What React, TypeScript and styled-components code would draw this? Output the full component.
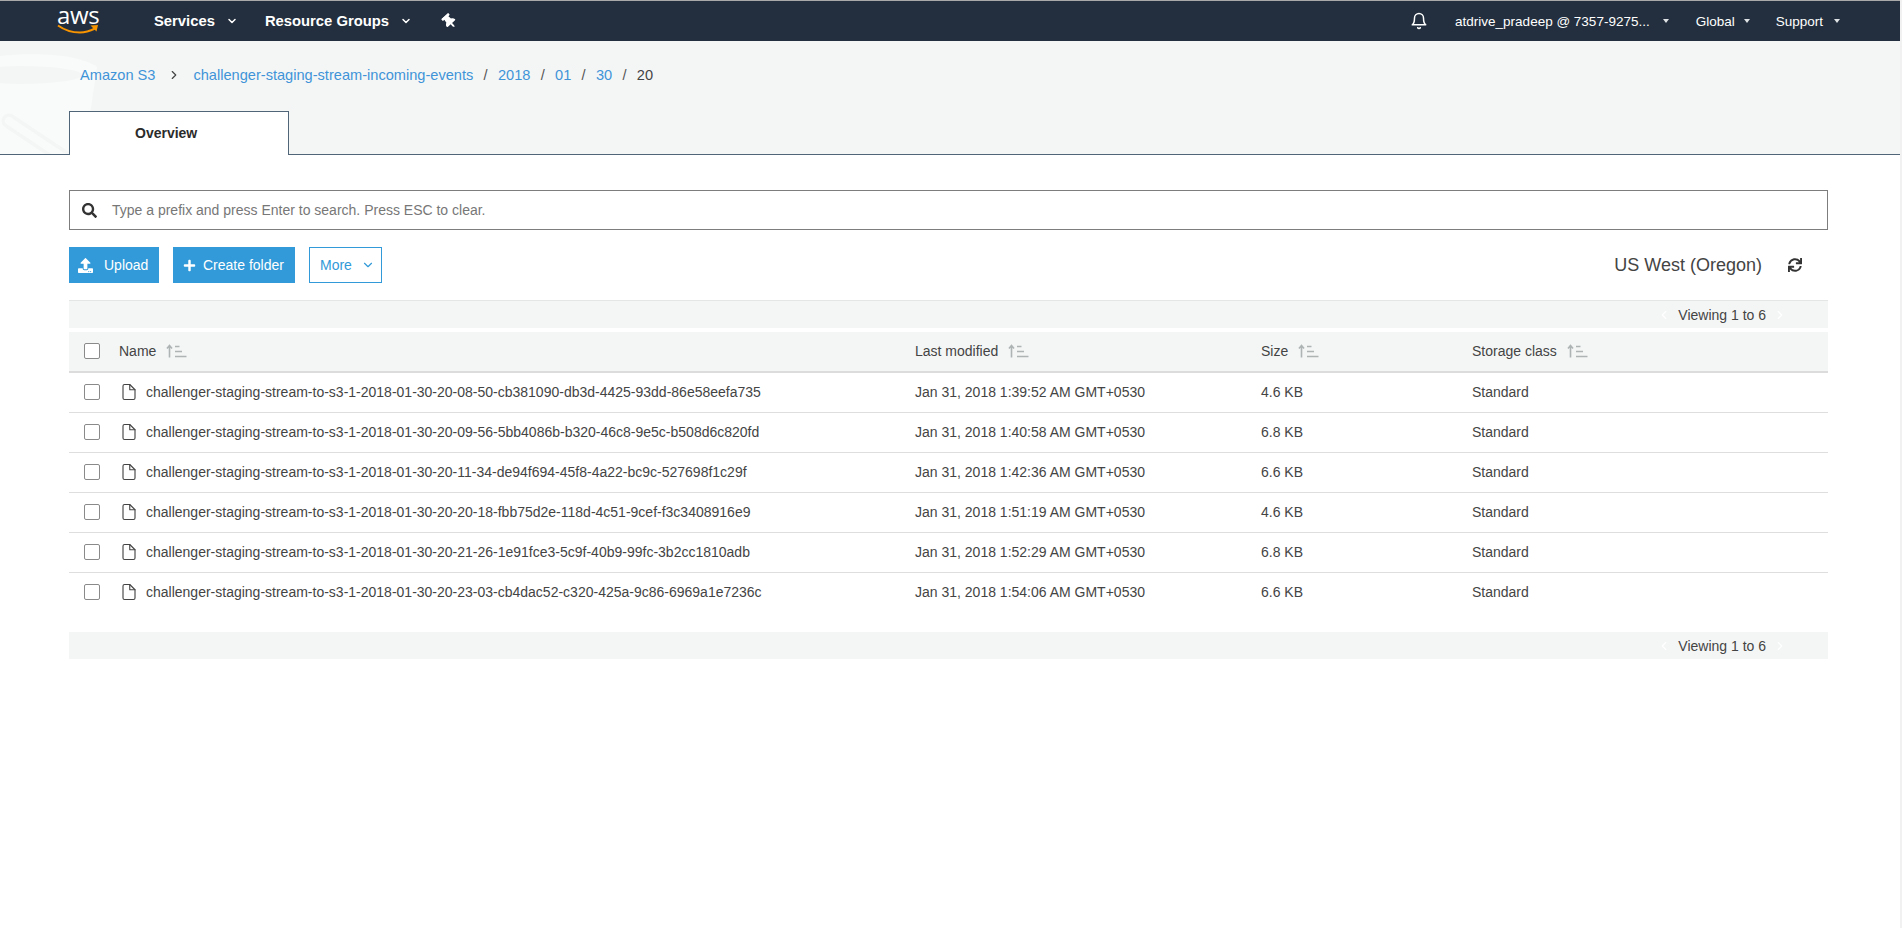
import styled, { createGlobalStyle } from "styled-components";
import { FaPlus, FaSearch, FaSync, FaThumbtack, FaUpload } from "react-icons/fa";
import { FiBell, FiChevronDown, FiChevronLeft, FiChevronRight, FiFile } from "react-icons/fi";

const GlobalStyle = createGlobalStyle`
  * {
    box-sizing: border-box;
  }

  html,
  body {
    margin: 0;
    height: 100%;
    background: #fff;
    overflow: hidden;
  }

  body {
    font-family: "Liberation Sans", Arial, sans-serif;
    font-size: 14px;
    color: #444;
  }
`;

const Shell = styled.div`
  display: flex;
  height: 928px;
`;

const Page = styled.div`
  width: 1900px;
  display: flex;
  flex-direction: column;
`;

const ScrollTrack = styled.div`
  width: 2px;
  background: #f1f1f1;
`;

const TopBar = styled.header`
  height: 41px;
  flex: none;
  background: #232f3e;
  border-top: 1px solid #a9a9a9;
  display: flex;
  align-items: center;
  color: #fff;
`;

const Logo = styled.div`
  position: relative;
  width: 42px;
  height: 32px;
  margin: -3px 0 0 57px;
`;

const LogoText = styled.span`
  display: block;
  font-family: "Open Sans", sans-serif;
  font-size: 24px;
  line-height: 22px;
  text-align: center;
  letter-spacing: -0.3px;
`;

const LogoSmile = styled.svg`
  position: absolute;
  left: 0;
  top: 19px;
`;

const NavLeft = styled.nav`
  display: flex;
  align-items: center;
  margin-left: 55px;
`;

const NavMenu = styled.div<{ $after: number }>`
  display: flex;
  align-items: center;
  gap: 11px;
  font-weight: 700;
  font-size: 14.8px;
  margin-right: ${(p) => p.$after}px;
`;

const PinIcon = styled(FaThumbtack)`
  width: 15px;
  height: 15px;
  transform: rotate(-42deg);
  margin-left: 2px;
`;

const NavRight = styled.div`
  margin-left: auto;
  display: flex;
  align-items: center;
  font-size: 13.5px;
  padding-right: 60px;
`;

const BellIcon = styled(FiBell)`
  width: 18px;
  height: 18px;
  margin-right: 27px;
`;

const AccountMenu = styled.div<{ $gap: number; $after: number }>`
  display: flex;
  align-items: center;
  gap: ${(p) => p.$gap}px;
  margin-right: ${(p) => p.$after}px;
`;

const Caret = styled.span`
  width: 0;
  height: 0;
  border-left: 3.5px solid transparent;
  border-right: 3.5px solid transparent;
  border-top: 4px solid #dfe3e6;
`;

const NavChevron = styled(FiChevronDown)`
  width: 12px;
  height: 12px;
  stroke-width: 3;
`;

const SubHeader = styled.section`
  position: relative;
  flex: none;
  height: 114px;
  background: #f4f6f6;
  border-bottom: 1px solid #516578;
`;

const Watermark = styled.svg`
  position: absolute;
  left: 0;
  top: 0;
`;

const Breadcrumb = styled.div`
  position: relative;
  display: flex;
  align-items: center;
  height: 66px;
  padding: 1px 0 0 80px;
  font-size: 14.6px;
`;

const Crumb = styled.span`
  color: #3f94d8;
`;

const CrumbCurrent = styled.span`
  color: #444;
`;

const CrumbSlash = styled.span`
  color: #555;
  margin: 0 10.3px;
`;

const CrumbArrow = styled(FiChevronRight)`
  width: 14px;
  height: 14px;
  color: #444;
  margin: 0 12px;
`;

const Tab = styled.div`
  position: relative;
  margin: 4px 0 0 69px;
  width: 220px;
  height: 44px;
  background: #fff;
  border: 1px solid #516578;
  border-bottom: 0;
  padding: 0 0 1px 65px;
  display: flex;
  align-items: center;
  font-size: 14px;
  font-weight: 700;
  color: #2b2b2b;
`;

const Content = styled.main`
  padding: 35px 72px 0 69px;
`;

const SearchRow = styled.div`
  height: 40px;
  border: 1px solid #7d7d7d;
  background: #fff;
  display: flex;
  align-items: center;
  padding-left: 12px;
  color: #777;
  font-size: 14px;
`;

const SearchIcon = styled(FaSearch)`
  width: 15px;
  height: 15px;
  color: #333;
  margin-right: 15px;
`;

const Toolbar = styled.div`
  margin-top: 17px;
  height: 36px;
  display: flex;
  align-items: center;
  gap: 14px;
`;

const PrimaryButton = styled.button<{ $width: number; $inset: number; $gap: number }>`
  width: ${(p) => p.$width}px;
  height: 36px;
  border: 0;
  padding: 0 0 0 ${(p) => p.$inset}px;
  background: #329ad8;
  color: #fff;
  font-family: inherit;
  font-size: 14px;
  display: flex;
  align-items: center;
  gap: ${(p) => p.$gap}px;
`;

const OutlineButton = styled.button`
  width: 73px;
  height: 36px;
  border: 1px solid #329ad8;
  background: #fff;
  color: #329ad8;
  font-family: inherit;
  font-size: 14px;
  padding: 0 0 0 10px;
  display: flex;
  align-items: center;
  gap: 9px;
`;

const Region = styled.div`
  margin-left: auto;
  display: flex;
  align-items: center;
  font-size: 18px;
  color: #444;
  padding-right: 26px;
  gap: 26px;
`;

const RefreshIcon = styled(FaSync)`
  width: 14px;
  height: 14px;
  color: #333;
`;

const PagerStrip = styled.div<{ $top: number; $line: boolean }>`
  margin-top: ${(p) => p.$top}px;
  height: ${(p) => (p.$line ? 28 : 27)}px;
  background: #f4f6f6;
  border-top: ${(p) => (p.$line ? "1px solid #e4e6e6" : "0")};
  display: flex;
  align-items: center;
  justify-content: flex-end;
  padding-right: 41px;
  font-size: 14px;
  gap: 7px;
  color: #444;
`;

const PagerArrow = styled.span`
  display: flex;
  color: #fff;
  font-size: 14px;
`;

const Row = styled.div`
  display: grid;
  grid-template-columns: 50px 796px 346px 211px 1fr;
  align-items: center;
  height: 40px;
  padding-bottom: 2px;
  border-bottom: 1px solid #dedede;
  font-size: 14px;
  color: #444;
`;

const HeaderRow = styled(Row)`
  margin-top: 4px;
  height: 41px;
  background: #f4f6f6;
  border-bottom: 2px solid #dcdcdc;
`;

const Rows = styled.div`
  & > :last-child {
    border-bottom: 0;
  }
`;

const CheckCell = styled.div`
  padding-left: 15px;
  display: flex;
`;

const Check = styled.span`
  width: 16px;
  height: 16px;
  background: #fff;
  border: 1px solid #8a8a8a;
  border-radius: 2px;
`;

const HeadCell = styled.div`
  display: flex;
  align-items: center;
  gap: 10px;
`;

const NameCell = styled.div`
  display: flex;
  align-items: center;
  gap: 8px;
  padding-left: 1px;
`;

const FileIcon = styled(FiFile)`
  width: 18px;
  height: 18px;
  color: #444;
  stroke-width: 1.5;
`;

const SortIcon = styled.svg`
  flex: none;
`;

const Sort = () => (
  <SortIcon width="21" height="14" viewBox="0 0 21 14">
    <path d="M3.5 13.5V1.5M1 4.5 3.5 1.5 6 4.5" fill="none" stroke="#aeb3b3" strokeWidth="1.6" />
    <path d="M9 2.5h4.5M9 7.5h7M9 12.5h11.5" fill="none" stroke="#aeb3b3" strokeWidth="1.7" />
  </SortIcon>
);

const FILES = [
  ["challenger-staging-stream-to-s3-1-2018-01-30-20-08-50-cb381090-db3d-4425-93dd-86e58eefa735", "Jan 31, 2018 1:39:52 AM GMT+0530", "4.6 KB"],
  ["challenger-staging-stream-to-s3-1-2018-01-30-20-09-56-5bb4086b-b320-46c8-9e5c-b508d6c820fd", "Jan 31, 2018 1:40:58 AM GMT+0530", "6.8 KB"],
  ["challenger-staging-stream-to-s3-1-2018-01-30-20-11-34-de94f694-45f8-4a22-bc9c-527698f1c29f", "Jan 31, 2018 1:42:36 AM GMT+0530", "6.6 KB"],
  ["challenger-staging-stream-to-s3-1-2018-01-30-20-20-18-fbb75d2e-118d-4c51-9cef-f3c3408916e9", "Jan 31, 2018 1:51:19 AM GMT+0530", "4.6 KB"],
  ["challenger-staging-stream-to-s3-1-2018-01-30-20-21-26-1e91fce3-5c9f-40b9-99fc-3b2cc1810adb", "Jan 31, 2018 1:52:29 AM GMT+0530", "6.8 KB"],
  ["challenger-staging-stream-to-s3-1-2018-01-30-20-23-03-cb4dac52-c320-425a-9c86-6969a1e7236c", "Jan 31, 2018 1:54:06 AM GMT+0530", "6.6 KB"],
];

const Pager = ({ top, line }: { top: number; line: boolean }) => (
  <PagerStrip $top={top} $line={line}>
    <PagerArrow>
      <FiChevronLeft />
    </PagerArrow>
    Viewing 1 to 6
    <PagerArrow>
      <FiChevronRight />
    </PagerArrow>
  </PagerStrip>
);

export default function App() {
  return (
    <Shell>
      <GlobalStyle />
      <Page>
        <TopBar>
          <Logo>
            <LogoText>aws</LogoText>
            <LogoSmile width="42" height="12" viewBox="0 0 42 12">
              <path d="M1 2.5C8 7.5 16 9.5 23 9.5c5 0 10-1.5 15-4" fill="none" stroke="#f79400" strokeWidth="2" />
              <path d="M33.5 2.5 41 2l-1.5 6.5z" fill="#f79400" />
            </LogoSmile>
          </Logo>
          <NavLeft>
            <NavMenu $after={27}>
              Services
              <NavChevron />
            </NavMenu>
            <NavMenu $after={28}>
              Resource Groups
              <NavChevron />
            </NavMenu>
            <PinIcon />
          </NavLeft>
          <NavRight>
            <BellIcon />
            <AccountMenu $gap={13} $after={27}>
              atdrive_pradeep @ 7357-9275...
              <Caret />
            </AccountMenu>
            <AccountMenu $gap={9} $after={26}>
              Global
              <Caret />
            </AccountMenu>
            <AccountMenu $gap={11} $after={0}>
              Support
              <Caret />
            </AccountMenu>
          </NavRight>
        </TopBar>

        <SubHeader>
          <Watermark width="110" height="113" viewBox="0 0 110 113">
            <path d="M0 15C40 11 80 14 97 26L84 113H0z" fill="#f9fbfb" />
            <ellipse cx="22" cy="34" rx="60" ry="9" fill="#f4f6f6" />
            <path d="M9 80 66 118" fill="none" stroke="#f4f6f6" strokeWidth="15" strokeLinecap="round" />
            <path d="M9 80 66 118" fill="none" stroke="#f9fbfb" strokeWidth="8" strokeLinecap="round" />
          </Watermark>
          <Breadcrumb>
            <Crumb>Amazon S3</Crumb>
            <CrumbArrow />
            <Crumb>challenger-staging-stream-incoming-events</Crumb>
            <CrumbSlash>/</CrumbSlash>
            <Crumb>2018</Crumb>
            <CrumbSlash>/</CrumbSlash>
            <Crumb>01</Crumb>
            <CrumbSlash>/</CrumbSlash>
            <Crumb>30</Crumb>
            <CrumbSlash>/</CrumbSlash>
            <CrumbCurrent>20</CrumbCurrent>
          </Breadcrumb>
          <Tab>Overview</Tab>
        </SubHeader>

        <Content>
          <SearchRow>
            <SearchIcon />
            Type a prefix and press Enter to search. Press ESC to clear.
          </SearchRow>
          <Toolbar>
            <PrimaryButton $width={90} $inset={9} $gap={11}>
              <FaUpload size={15} />
              Upload
            </PrimaryButton>
            <PrimaryButton $width={122} $inset={10} $gap={7}>
              <FaPlus size={13} />
              Create folder
            </PrimaryButton>
            <OutlineButton>
              More
              <FiChevronDown size={14} />
            </OutlineButton>
            <Region>
              US West (Oregon)
              <RefreshIcon />
            </Region>
          </Toolbar>

          <Pager top={17} line />

          <HeaderRow>
            <CheckCell>
              <Check />
            </CheckCell>
            <HeadCell>
              Name <Sort />
            </HeadCell>
            <HeadCell>
              Last modified <Sort />
            </HeadCell>
            <HeadCell>
              Size <Sort />
            </HeadCell>
            <HeadCell>
              Storage class <Sort />
            </HeadCell>
          </HeaderRow>

          <Rows>
            {FILES.map(([name, modified, size]) => (
              <Row key={name}>
                <CheckCell>
                  <Check />
                </CheckCell>
                <NameCell>
                  <FileIcon />
                  {name}
                </NameCell>
                <div>{modified}</div>
                <div>{size}</div>
                <div>Standard</div>
              </Row>
            ))}
          </Rows>

          <Pager top={19} line={false} />
        </Content>
      </Page>
      <ScrollTrack />
    </Shell>
  );
}
